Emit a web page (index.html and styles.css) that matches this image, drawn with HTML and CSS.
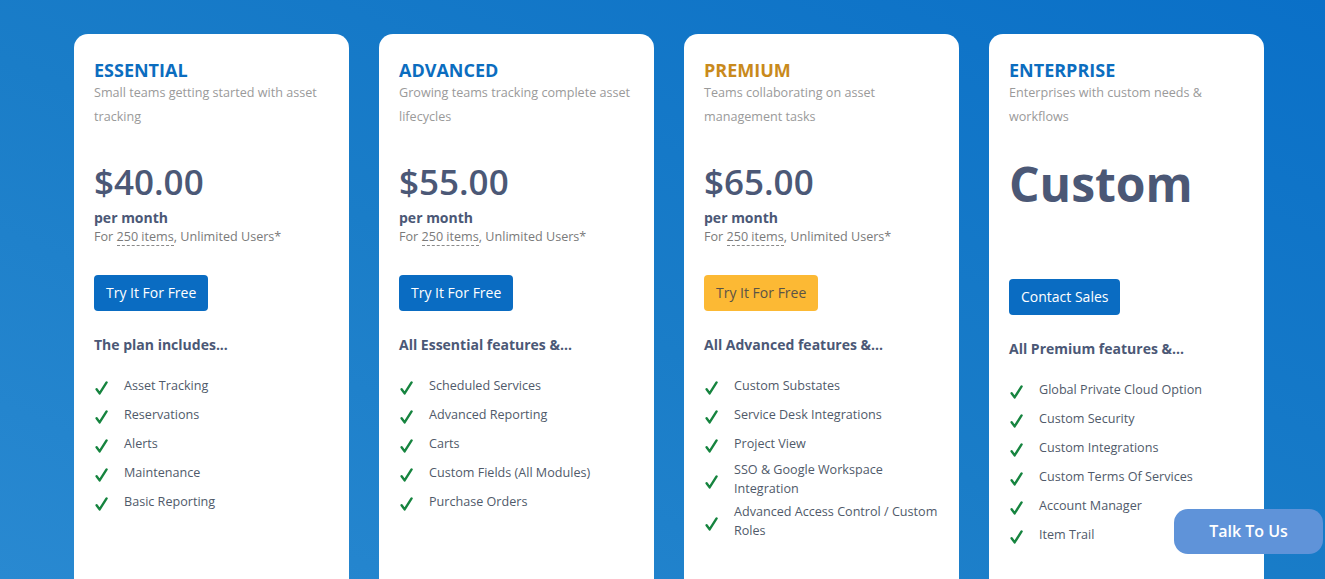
FILE: index.html
```html
<!DOCTYPE html>
<html lang="en">
<head>
<meta charset="utf-8">
<title>Pricing</title>
<link rel="stylesheet" href="styles.css">
</head>
<body>
<main class="plans">
  <section class="card">
    <h2 class="plan-name">ESSENTIAL</h2>
    <p class="plan-desc">Small teams getting started with asset tracking</p>
    <div class="price-block">
      <div class="price">$40.00</div>
      <div class="period">per month</div>
      <div class="note">For <span class="dashed">250 items</span>, Unlimited Users*</div>
    </div>
    <a class="btn" href="#">Try It For Free</a>
    <h3 class="includes">The plan includes...</h3>
    <ul class="features">
      <li><span class="check"><svg viewBox="0 0 13 14" width="13" height="14"><path d="M1.6 8.2 L4.6 12.4 L11.6 1.4" /></svg></span><span>Asset Tracking</span></li>
      <li><span class="check"><svg viewBox="0 0 13 14" width="13" height="14"><path d="M1.6 8.2 L4.6 12.4 L11.6 1.4" /></svg></span><span>Reservations</span></li>
      <li><span class="check"><svg viewBox="0 0 13 14" width="13" height="14"><path d="M1.6 8.2 L4.6 12.4 L11.6 1.4" /></svg></span><span>Alerts</span></li>
      <li><span class="check"><svg viewBox="0 0 13 14" width="13" height="14"><path d="M1.6 8.2 L4.6 12.4 L11.6 1.4" /></svg></span><span>Maintenance</span></li>
      <li><span class="check"><svg viewBox="0 0 13 14" width="13" height="14"><path d="M1.6 8.2 L4.6 12.4 L11.6 1.4" /></svg></span><span>Basic Reporting</span></li>
    </ul>
  </section>

  <section class="card">
    <h2 class="plan-name">ADVANCED</h2>
    <p class="plan-desc">Growing teams tracking complete asset lifecycles</p>
    <div class="price-block">
      <div class="price">$55.00</div>
      <div class="period">per month</div>
      <div class="note">For <span class="dashed">250 items</span>, Unlimited Users*</div>
    </div>
    <a class="btn" href="#">Try It For Free</a>
    <h3 class="includes">All Essential features &amp;...</h3>
    <ul class="features">
      <li><span class="check"><svg viewBox="0 0 13 14" width="13" height="14"><path d="M1.6 8.2 L4.6 12.4 L11.6 1.4" /></svg></span><span>Scheduled Services</span></li>
      <li><span class="check"><svg viewBox="0 0 13 14" width="13" height="14"><path d="M1.6 8.2 L4.6 12.4 L11.6 1.4" /></svg></span><span>Advanced Reporting</span></li>
      <li><span class="check"><svg viewBox="0 0 13 14" width="13" height="14"><path d="M1.6 8.2 L4.6 12.4 L11.6 1.4" /></svg></span><span>Carts</span></li>
      <li><span class="check"><svg viewBox="0 0 13 14" width="13" height="14"><path d="M1.6 8.2 L4.6 12.4 L11.6 1.4" /></svg></span><span>Custom Fields (All Modules)</span></li>
      <li><span class="check"><svg viewBox="0 0 13 14" width="13" height="14"><path d="M1.6 8.2 L4.6 12.4 L11.6 1.4" /></svg></span><span>Purchase Orders</span></li>
    </ul>
  </section>

  <section class="card">
    <h2 class="plan-name premium">PREMIUM</h2>
    <p class="plan-desc">Teams collaborating on asset management tasks</p>
    <div class="price-block">
      <div class="price">$65.00</div>
      <div class="period">per month</div>
      <div class="note">For <span class="dashed">250 items</span>, Unlimited Users*</div>
    </div>
    <a class="btn btn-yellow" href="#">Try It For Free</a>
    <h3 class="includes">All Advanced features &amp;...</h3>
    <ul class="features">
      <li><span class="check"><svg viewBox="0 0 13 14" width="13" height="14"><path d="M1.6 8.2 L4.6 12.4 L11.6 1.4" /></svg></span><span>Custom Substates</span></li>
      <li><span class="check"><svg viewBox="0 0 13 14" width="13" height="14"><path d="M1.6 8.2 L4.6 12.4 L11.6 1.4" /></svg></span><span>Service Desk Integrations</span></li>
      <li><span class="check"><svg viewBox="0 0 13 14" width="13" height="14"><path d="M1.6 8.2 L4.6 12.4 L11.6 1.4" /></svg></span><span>Project View</span></li>
      <li><span class="check"><svg viewBox="0 0 13 14" width="13" height="14"><path d="M1.6 8.2 L4.6 12.4 L11.6 1.4" /></svg></span><span>SSO &amp; Google Workspace Integration</span></li>
      <li><span class="check"><svg viewBox="0 0 13 14" width="13" height="14"><path d="M1.6 8.2 L4.6 12.4 L11.6 1.4" /></svg></span><span>Advanced Access Control / Custom Roles</span></li>
    </ul>
  </section>

  <section class="card">
    <h2 class="plan-name">ENTERPRISE</h2>
    <p class="plan-desc">Enterprises with custom needs &amp; workflows</p>
    <div class="price-block price-custom">
      <div class="custom">Custom</div>
    </div>
    <a class="btn" href="#">Contact Sales</a>
    <h3 class="includes">All Premium features &amp;...</h3>
    <ul class="features">
      <li><span class="check"><svg viewBox="0 0 13 14" width="13" height="14"><path d="M1.6 8.2 L4.6 12.4 L11.6 1.4" /></svg></span><span>Global Private Cloud Option</span></li>
      <li><span class="check"><svg viewBox="0 0 13 14" width="13" height="14"><path d="M1.6 8.2 L4.6 12.4 L11.6 1.4" /></svg></span><span>Custom Security</span></li>
      <li><span class="check"><svg viewBox="0 0 13 14" width="13" height="14"><path d="M1.6 8.2 L4.6 12.4 L11.6 1.4" /></svg></span><span>Custom Integrations</span></li>
      <li><span class="check"><svg viewBox="0 0 13 14" width="13" height="14"><path d="M1.6 8.2 L4.6 12.4 L11.6 1.4" /></svg></span><span>Custom Terms Of Services</span></li>
      <li><span class="check"><svg viewBox="0 0 13 14" width="13" height="14"><path d="M1.6 8.2 L4.6 12.4 L11.6 1.4" /></svg></span><span>Account Manager</span></li>
      <li><span class="check"><svg viewBox="0 0 13 14" width="13" height="14"><path d="M1.6 8.2 L4.6 12.4 L11.6 1.4" /></svg></span><span>Item Trail</span></li>
    </ul>
  </section>
</main>
<a class="talk" href="#">Talk To Us</a>
</body>
</html>
```
FILE: styles.css
```css
html, body {
  margin: 0;
  padding: 0;
  height: 100%;
  overflow: hidden;
}
body {
  font-family: "Open Sans", "Noto Sans", sans-serif;
  background: linear-gradient(to top right, #2989d1 0%, #1a7dc8 45%, #0a70c8 100%);
}
.plans {
  display: flex;
  gap: 30px;
  padding: 34px 0 0 74px;
}
.card {
  box-sizing: border-box;
  width: 275px;
  height: 600px;
  flex: none;
  background: #fff;
  border-radius: 14px;
  padding: 26px 20px 0 20px;
  display: flex;
  flex-direction: column;
  align-items: flex-start;
}
.plan-name {
  margin: 0;
  font-size: 18px;
  line-height: 21px;
  font-weight: 700;
  color: #0b6dbf;
}
.plan-name.premium {
  color: #c98a1c;
}
.plan-desc {
  margin: 0;
  font-size: 12.6px;
  line-height: 24px;
  color: #9a9a9a;
}
.price-block {
  margin-top: 32px;
  height: 85px;
}
.price-custom {
  margin-top: 26px;
  height: 95px;
}
.price {
  font-size: 35px;
  line-height: 42px;
  font-weight: 600;
  color: #4b5876;
  margin-bottom: 5px;
}
.custom {
  font-size: 48px;
  line-height: 58px;
  font-weight: 700;
  color: #4b5876;
}
.period {
  font-size: 14px;
  line-height: 19px;
  font-weight: 700;
  color: #4b5876;
}
.note {
  padding-top: 1px;
  font-size: 12.6px;
  line-height: 18px;
  color: #7a7a7a;
}
.dashed {
  border-bottom: 1px dashed #8a8a8a;
}
.btn {
  margin-top: 29px;
  display: inline-block;
  height: 36px;
  line-height: 36px;
  padding: 0 12px;
  border-radius: 4px;
  background: #0a6cc2;
  color: #fff;
  font-size: 14px;
  text-decoration: none;
}
.btn-yellow {
  background: #fcb934;
  color: #5a5346;
}
.includes {
  margin: 24px 0 0 0;
  font-size: 14px;
  line-height: 20px;
  font-weight: 700;
  color: #4b5876;
}
.features {
  list-style: none;
  margin: 16px 0 0 0;
  padding: 0;
  width: 100%;
}
.features li {
  box-sizing: border-box;
  min-height: 29px;
  padding: 2px 0;
  display: flex;
  align-items: center;
  font-size: 12.6px;
  line-height: 19px;
  color: #505a6a;
}
.check {
  flex: none;
  width: 30px;
  padding-top: 5px;
  display: flex;
}
.check svg {
  margin-left: 1px;
  fill: none;
  stroke: #16843f;
  stroke-width: 2.4;
  stroke-linecap: round;
  stroke-linejoin: round;
}
.talk {
  position: fixed;
  right: 2px;
  bottom: 25px;
  width: 149px;
  height: 45px;
  line-height: 45px;
  text-align: center;
  border-radius: 14px;
  background: #5f93d9;
  color: #fff;
  font-size: 16px;
  font-weight: 600;
  text-decoration: none;
}
```
